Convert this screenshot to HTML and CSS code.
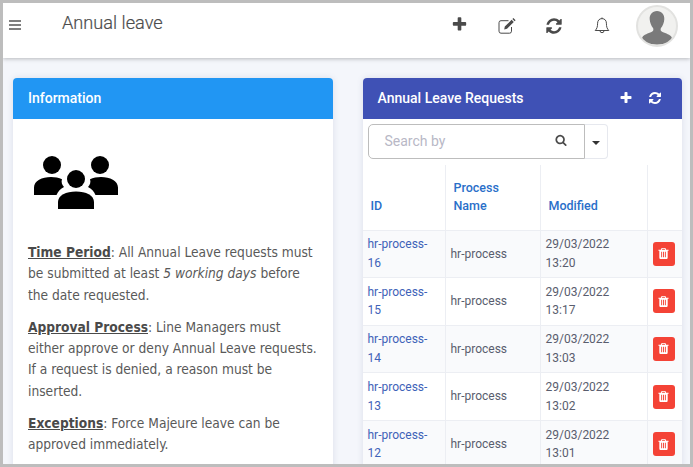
FILE: index.html
```html
<!DOCTYPE html>
<html lang="en">
<head>
    <meta charset="UTF-8">
    <meta name="viewport" content="width=device-width, initial-scale=1.0">
    <title>Annual leave</title>
    <link rel="stylesheet" href="styles.css">
</head>
<body>
    <svg class="sprites" width="0" height="0">
        <symbol id="i-plus" viewBox="0 0 1792 1792"><path d="M1600 736v192q0 40-28 68t-68 28h-416v416q0 40-28 68t-68 28h-192q-40 0-68-28t-28-68v-416h-416q-40 0-68-28t-28-68v-192q0-40 28-68t68-28h416v-416q0-40 28-68t68-28h192q40 0 68 28t28 68v416h416q40 0 68 28t28 68z"/></symbol>
        <symbol id="i-refresh" viewBox="0 0 1792 1792"><path d="M1639 1056q0 5-1 7-64 268-268 434.5t-478 166.5q-146 0-282.5-55t-243.5-157l-129 129q-19 19-45 19t-45-19-19-45v-448q0-26 19-45t45-19h448q26 0 45 19t19 45-19 45l-137 137q71 66 161 102t187 36q134 0 250-65t186-179q11-17 53-117 8-23 30-23h192q13 0 22.5 9.5t9.5 22.5zm25-800v448q0 26-19 45t-45 19h-448q-26 0-45-19t-19-45 19-45l138-138q-148-137-349-137-134 0-250 65t-186 179q-11 17-53 117-8 23-30 23h-199q-13 0-22.5-9.5t-9.5-22.5v-7q65-268 270-434.5t480-166.5q146 0 284 55.5t245 156.5l130-129q19-19 45-19t45 19 19 45z"/></symbol>
        <symbol id="i-trash" viewBox="0 0 1792 1792"><path d="M704 1376v-704q0-14-9-23t-23-9h-64q-14 0-23 9t-9 23v704q0 14 9 23t23 9h64q14 0 23-9t9-23zm256 0v-704q0-14-9-23t-23-9h-64q-14 0-23 9t-9 23v704q0 14 9 23t23 9h64q14 0 23-9t9-23zm256 0v-704q0-14-9-23t-23-9h-64q-14 0-23 9t-9 23v704q0 14 9 23t23 9h64q14 0 23-9t9-23zm-544-992h448l-48-117q-7-9-17-11h-317q-10 2-17 11zm928 32v64q0 14-9 23t-23 9h-96v948q0 83-47 143.5t-113 60.5h-832q-66 0-113-58.5t-47-141.5v-952h-96q-14 0-23-9t-9-23v-64q0-14 9-23t23-9h309l70-167q15-37 54-63t79-26h320q40 0 79 26t54 63l70 167h309q14 0 23 9t9 23z"/></symbol>
    </svg>

    <div class="frame">
        <header class="topbar">
            <svg class="burger" viewBox="0 0 12 10" width="12" height="10"><path d="M0 1h12M0 5h12M0 9h12"/></svg>
            <h1 class="page-title">Annual leave</h1>
            <nav class="top-actions">
                <svg class="top-icon plus-icon"><use href="#i-plus"/></svg>
                <svg class="top-icon edit-icon" viewBox="0 0 18 18">
                    <path class="line" d="M13.5 10v4.2a2 2 0 0 1-2 2H3a2 2 0 0 1-2-2V5.7a2 2 0 0 1 2-2h7.5"/>
                    <path class="solid" d="M6.8 9.6 13.6 2.8l2.2 2.2L9 11.8l-2.8.6zM14.4 2l1-1 2.2 2.2-1 1z"/>
                </svg>
                <svg class="top-icon sync-icon"><use href="#i-refresh"/></svg>
                <svg class="top-icon bell-icon" viewBox="0 0 16 18">
                    <path class="line" d="M8 1.6c-2.8 0-4.4 2-4.4 4.6 0 3.6-.7 5.6-2.4 7.3h13.6c-1.7-1.7-2.4-3.7-2.4-7.3C12.4 3.6 10.8 1.6 8 1.6zM8 .5v1.1M6 13.7a2 2 0 0 0 4 0"/>
                </svg>
                <div class="avatar">
                    <svg viewBox="0 0 42 42" width="42" height="42">
                        <path d="M21 6c-4.8 0-7.6 3.7-7.3 8.3.2 3.2 1.5 6.6 3.3 8.7.6 1 .5 2.6-.4 3.3-2.8 1.8-7.6 2.7-9.6 5-1 1.2-1.3 2.7-1.4 4.2C9.2 38 14.6 39.5 21 39.5s11.8-1.5 15.4-4c-.1-1.5-.4-3-1.4-4.2-2-2.3-6.8-3.2-9.6-5-.9-.7-1-2.3-.4-3.3 1.8-2.1 3.1-5.5 3.3-8.7C28.6 9.7 25.8 6 21 6z"/>
                    </svg>
                </div>
            </nav>
        </header>

        <main class="content">
            <section class="card">
                <div class="card-head head-info">Information</div>
                <div class="card-body info-body">
                    <svg class="people" viewBox="0 0 84 54" width="84" height="54">
                        <circle cx="18" cy="9" r="9"/>
                        <circle cx="66" cy="9" r="9"/>
                        <path d="M0 39V31.5C0 25 8 21 17 21c4 0 8 .8 11 2.3-1 2.8 0 5.7 2 7.7-3.5 1.8-6 4.5-7.5 8z"/>
                        <path d="M84 39V31.5C84 25 76 21 67 21c-4 0-8 .8-11 2.3 1 2.8 0 5.7-2 7.7 3.5 1.8 6 4.5 7.5 8z"/>
                        <circle cx="42" cy="23" r="9"/>
                        <path d="M24 53V46c0-6.5 8-10.5 18-10.5S60 39.5 60 46v7z"/>
                    </svg>
                    <p><strong>Time Period</strong>: All Annual Leave requests must be submitted at least <em>5 working days</em> before the date requested.</p>
                    <p><strong>Approval Process</strong>: Line Managers must either approve or deny Annual Leave requests. If a request is denied, a reason must be inserted.</p>
                    <p><strong>Exceptions</strong>: Force Majeure leave can be approved immediately.</p>
                </div>
            </section>

            <section class="card">
                <div class="card-head head-requests">
                    <span>Annual Leave Requests</span>
                    <span class="head-icons">
                        <svg><use href="#i-plus"/></svg>
                        <svg><use href="#i-refresh"/></svg>
                    </span>
                </div>
                <div class="search-row">
                    <div class="search-box">
                        <span class="placeholder">Search by</span>
                        <svg viewBox="0 0 1792 1792" width="12" height="12"><path d="M1216 832q0-185-131.5-316.5t-316.5-131.5-316.5 131.5-131.5 316.5 131.5 316.5 316.5 131.5 316.5-131.5 131.5-316.5zm512 832q0 52-38 90t-90 38q-54 0-90-38l-343-342q-179 124-399 124-143 0-273.5-55.5t-225-150-150-225-55.5-273.5 55.5-273.5 150-225 225-150 273.5-55.5 273.5 55.5 225 150 150 225 55.5 273.5q0 220-124 399l343 343q37 37 37 90z"/></svg>
                    </div>
                    <div class="search-drop"><span class="caret"></span></div>
                </div>
                <table class="requests">
                    <colgroup>
                        <col class="col-id"><col class="col-name"><col class="col-date"><col class="col-del">
                    </colgroup>
                    <thead>
                        <tr><th>ID</th><th>Process Name</th><th>Modified</th><th></th></tr>
                    </thead>
                    <tbody>
                        <tr><td><a href="#">hr-process-16</a></td><td>hr-process</td><td>29/03/2022 13:20</td><td><button class="del"><svg><use href="#i-trash"/></svg></button></td></tr>
                        <tr><td><a href="#">hr-process-15</a></td><td>hr-process</td><td>29/03/2022 13:17</td><td><button class="del"><svg><use href="#i-trash"/></svg></button></td></tr>
                        <tr><td><a href="#">hr-process-14</a></td><td>hr-process</td><td>29/03/2022 13:03</td><td><button class="del"><svg><use href="#i-trash"/></svg></button></td></tr>
                        <tr><td><a href="#">hr-process-13</a></td><td>hr-process</td><td>29/03/2022 13:02</td><td><button class="del"><svg><use href="#i-trash"/></svg></button></td></tr>
                        <tr><td><a href="#">hr-process-12</a></td><td>hr-process</td><td>29/03/2022 13:01</td><td><button class="del"><svg><use href="#i-trash"/></svg></button></td></tr>
                    </tbody>
                </table>
            </section>
        </main>
    </div>
</body>
</html>
```

FILE: styles.css
```css
html, body {
    margin: 0;
    padding: 0;
    height: 100%;
    overflow: hidden;
}

body {
    font-family: Roboto, sans-serif;
    color: #595d6e;
}

.sprites {
    display: none;
}

.frame {
    box-sizing: border-box;
    height: 467px;
    border: 3px solid #bdbdbd;
    background-color: #f4f6fb;
    overflow: hidden;
}

.topbar {
    box-sizing: border-box;
    height: 55px;
    background-color: #fff;
    box-shadow: 0 1px 4px rgba(0, 0, 0, 0.25);
    display: flex;
    align-items: flex-start;
    padding: 0 0 0 6px;
}

.burger {
    margin-top: 17px;
    fill: none;
    stroke: #555;
    stroke-width: 1.6;
}

.page-title {
    margin: 9px 0 0 41px;
    font-size: 18.2px;
    font-weight: 300;
    line-height: 22px;
    color: #4d4d4d;
    -webkit-text-stroke: 0.2px #4d4d4d;
}

.top-actions {
    margin-left: auto;
    display: flex;
    align-items: flex-start;
    padding-right: 12px;
}

.top-icon {
    display: block;
    width: 18px;
    height: 18px;
    margin-top: 14px;
    fill: #4a4a4a;
}

.plus-icon {
    width: 17px;
    height: 17px;
    margin-top: 13px;
}

.edit-icon {
    margin-left: 30px;
}

.edit-icon .line {
    fill: none;
    stroke: #4a4a4a;
    stroke-width: 1;
}

.edit-icon .solid {
    fill: #4a4a4a;
}

.sync-icon {
    margin-left: 29px;
}

.bell-icon {
    width: 16px;
    margin-left: 31px;
}

.bell-icon .line {
    fill: none;
    stroke: #4a4a4a;
    stroke-width: 1;
}

.avatar {
    box-sizing: border-box;
    width: 42px;
    height: 42px;
    margin: 2px 0 0 26px;
    border-radius: 50%;
    background-color: #f1f1ef;
    border: 2px solid #e2e2e0;
    overflow: hidden;
}

.avatar svg {
    display: block;
    margin: -2px;
    fill: #7a7a7a;
}

.content {
    display: flex;
    align-items: flex-start;
    gap: 30px;
    padding: 20px 8px 0 10px;
}

.card {
    flex: 1 1 0;
    background-color: #fff;
    border-radius: 4px 4px 0 0;
    box-shadow: 0 0 6px rgba(80, 90, 130, 0.15);
}

.card-head {
    box-sizing: border-box;
    height: 41px;
    padding: 0 15px 2px;
    display: flex;
    align-items: center;
    justify-content: space-between;
    color: #fff;
    font-size: 14px;
    font-weight: 500;
    border-radius: 4px 4px 0 0;
}

.head-info {
    background-color: #2196f3;
}

.head-requests {
    background-color: #3f51b5;
}

.head-icons {
    display: flex;
    gap: 15px;
    margin-right: 5px;
}

.head-icons svg {
    display: block;
    width: 14px;
    height: 14px;
    fill: #fff;
}

.info-body {
    padding: 29px 15px 20px;
    font-family: "DejaVu Sans", sans-serif;
    font-stretch: condensed;
    font-size: 13.65px;
    line-height: 21.3px;
    color: #595959;
}

.people {
    display: block;
    margin: 8px 0 32px 6px;
}

.info-body p {
    margin: 0 0 10.8px;
}

.info-body strong {
    text-decoration: underline;
    color: #4a4a4a;
}

.search-row {
    display: flex;
    padding: 5px 5px 0;
}

.search-box {
    box-sizing: border-box;
    width: 217px;
    height: 35px;
    border: 1px solid #bdbdbd;
    border-radius: 5px 0 0 5px;
    padding: 0 17px 2px 16px;
    display: flex;
    align-items: center;
    justify-content: space-between;
}

.placeholder {
    font-size: 14px;
    color: #b8b8c6;
}

.search-box svg {
    fill: #4a4a4a;
    margin-top: -2px;
}

.search-drop {
    box-sizing: border-box;
    width: 23px;
    height: 35px;
    border: 1px solid #e6e8ee;
    border-left: 0;
    border-radius: 0 4px 4px 0;
    display: flex;
    align-items: center;
    justify-content: center;
}

.caret {
    width: 0;
    height: 0;
    border: 4px solid transparent;
    border-top-color: #333;
    border-bottom: 0;
    margin-top: 2px;
}

.requests {
    width: 319px;
    margin-top: 6px;
    table-layout: fixed;
    border-collapse: collapse;
    font-size: 12px;
    line-height: 18.6px;
}

.col-id {
    width: 82.5px;
}

.col-name {
    width: 95px;
}

.col-date {
    width: 107px;
}

.col-del {
    width: 34.5px;
}

.requests th {
    box-sizing: border-box;
    height: 65px;
    padding: 0 8px 15px;
    text-align: left;
    vertical-align: bottom;
    font-size: 12.5px;
    line-height: 18px;
    font-weight: 500;
    color: #2a6fc9;
    border-left: 1px solid #eceef3;
    border-bottom: 1px solid #eceef3;
}

.requests td {
    box-sizing: border-box;
    height: 47.6px;
    padding: 4.5px 5px;
    vertical-align: middle;
    border-left: 1px solid #eceef3;
    border-bottom: 1px solid #eceef3;
}

.requests th:first-child,
.requests td:first-child {
    border-left: 0;
}

.requests tbody tr:nth-child(odd) {
    background-color: #f9fafc;
}

.requests a {
    color: #3f62b8;
    text-decoration: none;
}

.del {
    display: flex;
    align-items: center;
    justify-content: center;
    width: 22px;
    height: 24px;
    padding: 0;
    border: none;
    border-radius: 3px;
    background-color: #f44336;
}

.del svg {
    width: 13px;
    height: 13px;
    fill: #fff;
}
```
